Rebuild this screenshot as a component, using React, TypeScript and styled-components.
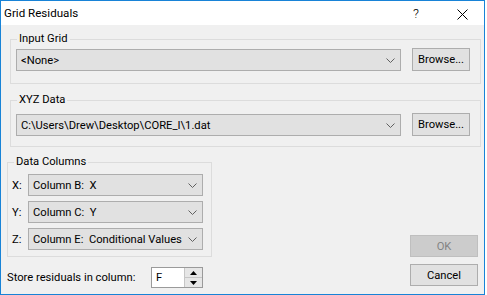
import React from "react";
import styled, { createGlobalStyle } from "styled-components";

const GlobalStyle = createGlobalStyle`
  html, body {
    margin: 0;
    padding: 0;
    background: #ffffff;
  }
  body {
    font-family: "Segoe UI", Roboto, "Noto Sans", sans-serif;
    font-size: 11.2px;
    color: #000000;
  }
`;

const Chevron = () => (
  <svg width="9" height="5" viewBox="0 0 9 5">
    <polyline points="0.5,0.5 4.5,4.5 8.5,0.5" fill="none" stroke="#606060" strokeWidth="1" />
  </svg>
);

const CloseIcon = () => (
  <svg width="11" height="11" viewBox="0 0 11 11">
    <line x1="0.5" y1="0.5" x2="10.5" y2="10.5" stroke="#000" strokeWidth="1" />
    <line x1="10.5" y1="0.5" x2="0.5" y2="10.5" stroke="#000" strokeWidth="1" />
  </svg>
);

const App = () => {
  return (
    <>
      <GlobalStyle />
      <Window>
        <TitleBar>
          <Title>Grid Residuals</Title>
          <HelpGlyph>?</HelpGlyph>
          <CloseButton>
            <CloseIcon />
          </CloseButton>
        </TitleBar>
        <Content>
          <Group $inset={3} $pad="8px 10px 12px 5px">
            <Legend>Input Grid</Legend>
            <FileRow>
              <Combo $width={385}>
                <ComboText>&lt;None&gt;</ComboText>
                <Chevron />
              </Combo>
              <Button $width={58} $height={23}>
                Browse...
              </Button>
            </FileRow>
          </Group>
          <Group $inset={3} $top={16} $pad="12px 10px 10px 5px">
            <Legend>XYZ Data</Legend>
            <FileRow>
              <Combo $width={385}>
                <ComboText>C:\Users\Drew\Desktop\CORE_I\1.dat</ComboText>
                <Chevron />
              </Combo>
              <Button $width={58} $height={23}>
                Browse...
              </Button>
            </FileRow>
          </Group>
          <BottomArea>
            <LeftColumn>
              <ColumnsGroup>
                <Legend>Data Columns</Legend>
                {[
                  ["X:", "Column B:  X"],
                  ["Y:", "Column C:  Y"],
                  ["Z:", "Column E:  Conditional Values"],
                ].map(([axis, value]) => (
                  <AxisRow key={axis}>
                    <AxisLabel>{axis}</AxisLabel>
                    <Combo $width={175}>
                      <ComboText>{value}</ComboText>
                      <Chevron />
                    </Combo>
                  </AxisRow>
                ))}
              </ColumnsGroup>
              <StoreRow>
                <StoreLabel>Store residuals in column:</StoreLabel>
                <SpinBox>
                  <SpinText>F</SpinText>
                  <SpinButtons>
                    <SpinButton>
                      <svg width="7" height="4" viewBox="0 0 7 4">
                        <polygon points="3.5,0 7,4 0,4" fill="#000" />
                      </svg>
                    </SpinButton>
                    <SpinButton>
                      <svg width="7" height="4" viewBox="0 0 7 4">
                        <polygon points="0,0 7,0 3.5,4" fill="#000" />
                      </svg>
                    </SpinButton>
                  </SpinButtons>
                </SpinBox>
              </StoreRow>
            </LeftColumn>
            <DialogButtons>
              <Button $width={68} $height={22} $disabled>
                OK
              </Button>
              <Button $width={68} $height={22}>
                Cancel
              </Button>
            </DialogButtons>
          </BottomArea>
        </Content>
      </Window>
    </>
  );
};

const Window = styled.div`
  width: 485px;
  height: 295px;
  box-sizing: border-box;
  border: 1px solid #1883d7;
  display: flex;
  flex-direction: column;
  background: #f0f0f0;
`;

const TitleBar = styled.div`
  height: 24px;
  background: #ffffff;
  display: flex;
  align-items: center;
  padding-left: 3px;
`;

const Title = styled.div`
  flex: 1;
  font-size: 11.6px;
  line-height: 15px;
  margin-top: 1px;
`;

const HelpGlyph = styled.div`
  font-size: 13px;
  font-weight: 300;
  line-height: 15px;
  margin-right: 38px;
  margin-top: 1px;
`;

const CloseButton = styled.div`
  display: flex;
  align-items: center;
  margin-right: 16px;
  margin-top: 2px;
`;

const Content = styled.div`
  flex: 1;
  background: #f0f0f0;
  padding: 14px 3px 0 6px;
  display: flex;
  flex-direction: column;
`;

const Group = styled.div<{ $inset?: number; $top?: number; $pad: string }>`
  position: relative;
  margin-left: ${(p) => p.$inset ?? 0}px;
  margin-top: ${(p) => p.$top ?? 0}px;
  padding: ${(p) => p.$pad};
  border: 1px solid #dcdcdc;
`;

const Legend = styled.div`
  position: absolute;
  top: -9px;
  left: 6px;
  padding: 0 2px;
  background: #f0f0f0;
  line-height: 15px;
  white-space: nowrap;
`;

const FileRow = styled.div`
  display: flex;
  align-items: flex-end;
  gap: 11px;
`;

const Combo = styled.div<{ $width: number }>`
  width: ${(p) => p.$width}px;
  height: 22px;
  box-sizing: border-box;
  border: 1px solid #adadad;
  background: #e1e1e1;
  display: flex;
  align-items: center;
  padding: 0 5px 0 4px;
`;

const ComboText = styled.div`
  flex: 1;
  white-space: pre;
  overflow: hidden;
  line-height: 15px;
`;

const Button = styled.div<{ $width: number; $height: number; $disabled?: boolean }>`
  width: ${(p) => p.$width}px;
  height: ${(p) => p.$height}px;
  box-sizing: border-box;
  border: 1px solid ${(p) => (p.$disabled ? "#bfbfbf" : "#adadad")};
  background: ${(p) => (p.$disabled ? "#cccccc" : "#e1e1e1")};
  color: ${(p) => (p.$disabled ? "#838383" : "#000000")};
  display: flex;
  align-items: center;
  justify-content: center;
  line-height: 15px;
`;

const BottomArea = styled.div`
  margin-top: 15px;
  display: flex;
  justify-content: space-between;
  align-items: flex-end;
`;

const LeftColumn = styled.div`
  display: flex;
  flex-direction: column;
`;

const ColumnsGroup = styled.div`
  position: relative;
  width: 205px;
  box-sizing: border-box;
  border: 1px solid #dcdcdc;
  padding: 11px 8px 6px 4px;
  display: flex;
  flex-direction: column;
  gap: 5px;
`;

const AxisRow = styled.div`
  display: flex;
  align-items: center;
`;

const AxisLabel = styled.div`
  width: 16px;
  line-height: 15px;
`;

const StoreRow = styled.div`
  margin-top: 10px;
  display: flex;
  align-items: center;
`;

const StoreLabel = styled.div`
  width: 144px;
  line-height: 15px;
`;

const SpinBox = styled.div`
  width: 52px;
  height: 21px;
  box-sizing: border-box;
  border: 1px solid #9a9a9a;
  background: #ffffff;
  display: flex;
`;

const SpinText = styled.div`
  flex: 1;
  padding-left: 4px;
  line-height: 19px;
`;

const SpinButtons = styled.div`
  width: 17px;
  display: flex;
  flex-direction: column;
  border-left: 1px solid #c6c6c6;
`;

const SpinButton = styled.div`
  flex: 1;
  background: #e6e6e6;
  display: flex;
  align-items: center;
  justify-content: center;
  & + & {
    border-top: 1px solid #c6c6c6;
  }
`;

const DialogButtons = styled.div`
  display: flex;
  flex-direction: column;
  gap: 7px;
  margin-right: 3px;
  margin-bottom: 2px;
`;

export default App;
